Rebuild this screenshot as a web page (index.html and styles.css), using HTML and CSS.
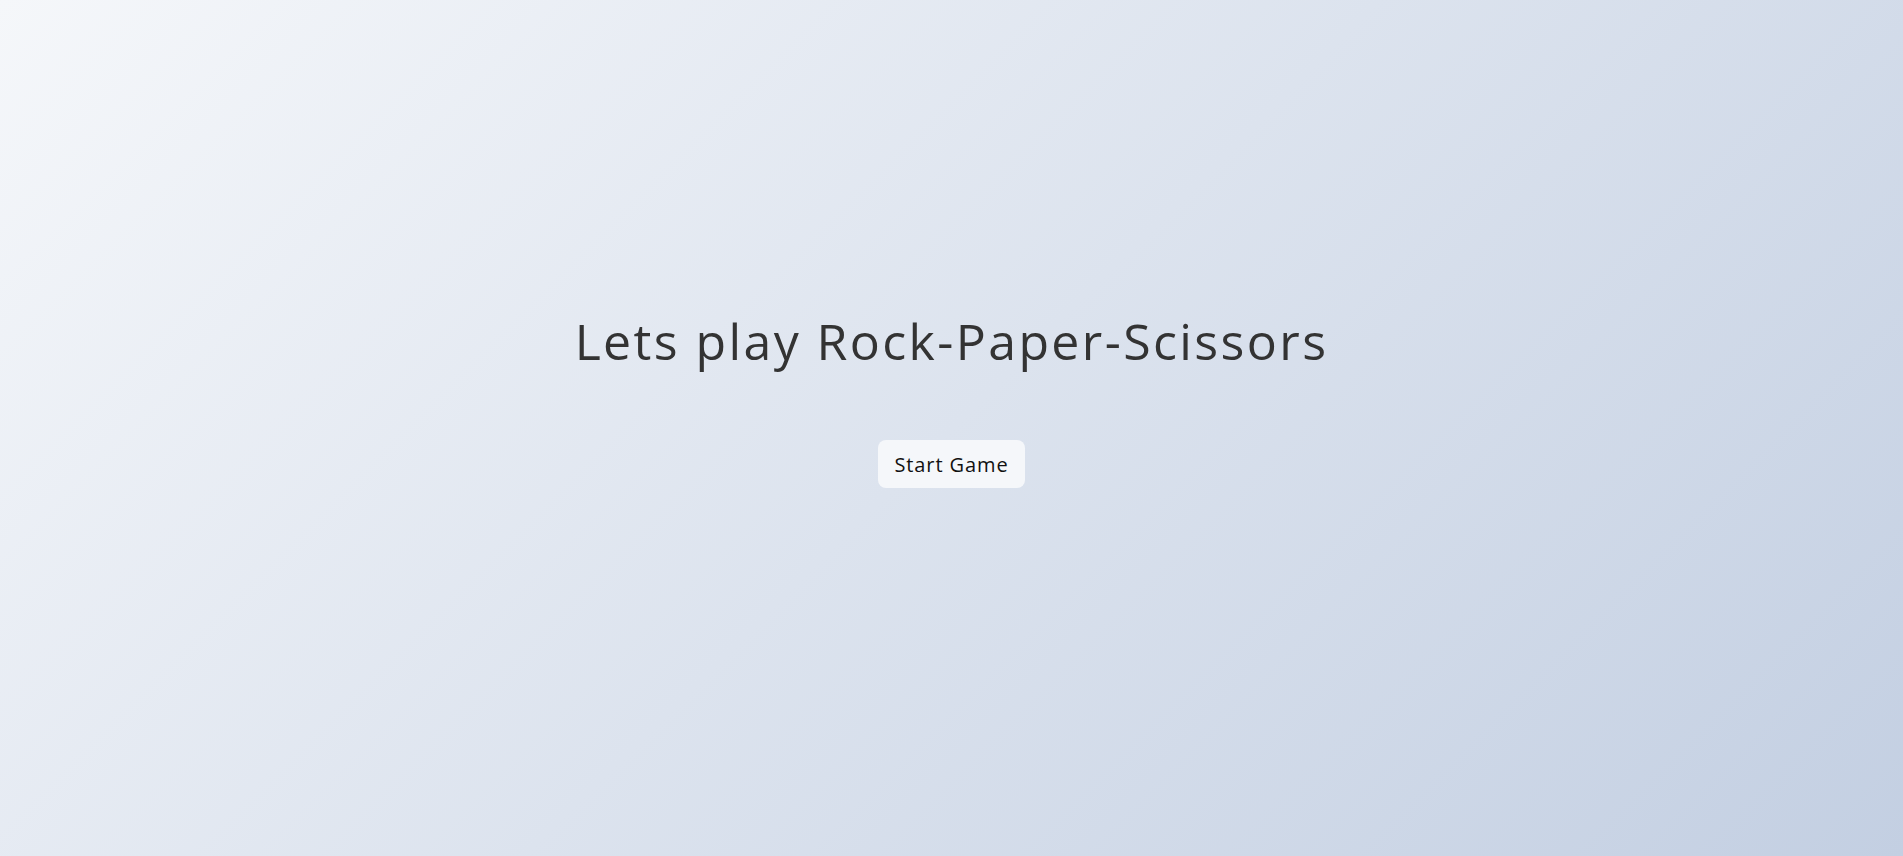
FILE: index.html
```html
<!DOCTYPE html>
<html lang="en">
<head>
<meta charset="utf-8">
<title>Rock Paper Scissors</title>
<link rel="stylesheet" href="styles.css">
</head>
<body>
<main class="intro">
  <h1 class="title">Lets play Rock-Paper-Scissors</h1>
  <button class="start-btn" type="button">Start Game</button>
</main>
</body>
</html>
```
FILE: styles.css
```css
html, body {
  margin: 0;
  height: 100%;
}
body {
  background: linear-gradient(135deg, #f5f7fa 0%, #c3cfe2 100%);
  font-family: "Open Sans", "DejaVu Sans", sans-serif;
  color: #333;
}
.intro {
  display: flex;
  flex-direction: column;
  align-items: center;
  padding-top: 305px;
}
.title {
  margin: 0;
  font-size: 50px;
  font-weight: 400;
  line-height: 72px;
  letter-spacing: 2.4px;
}
.start-btn {
  margin-top: 63px;
  width: 147px;
  height: 48px;
  border: none;
  border-radius: 8px;
  background: #f5f7fa;
  font-family: inherit;
  font-size: 20px;
  letter-spacing: 0.9px;
  color: #111;
  cursor: pointer;
}
```
